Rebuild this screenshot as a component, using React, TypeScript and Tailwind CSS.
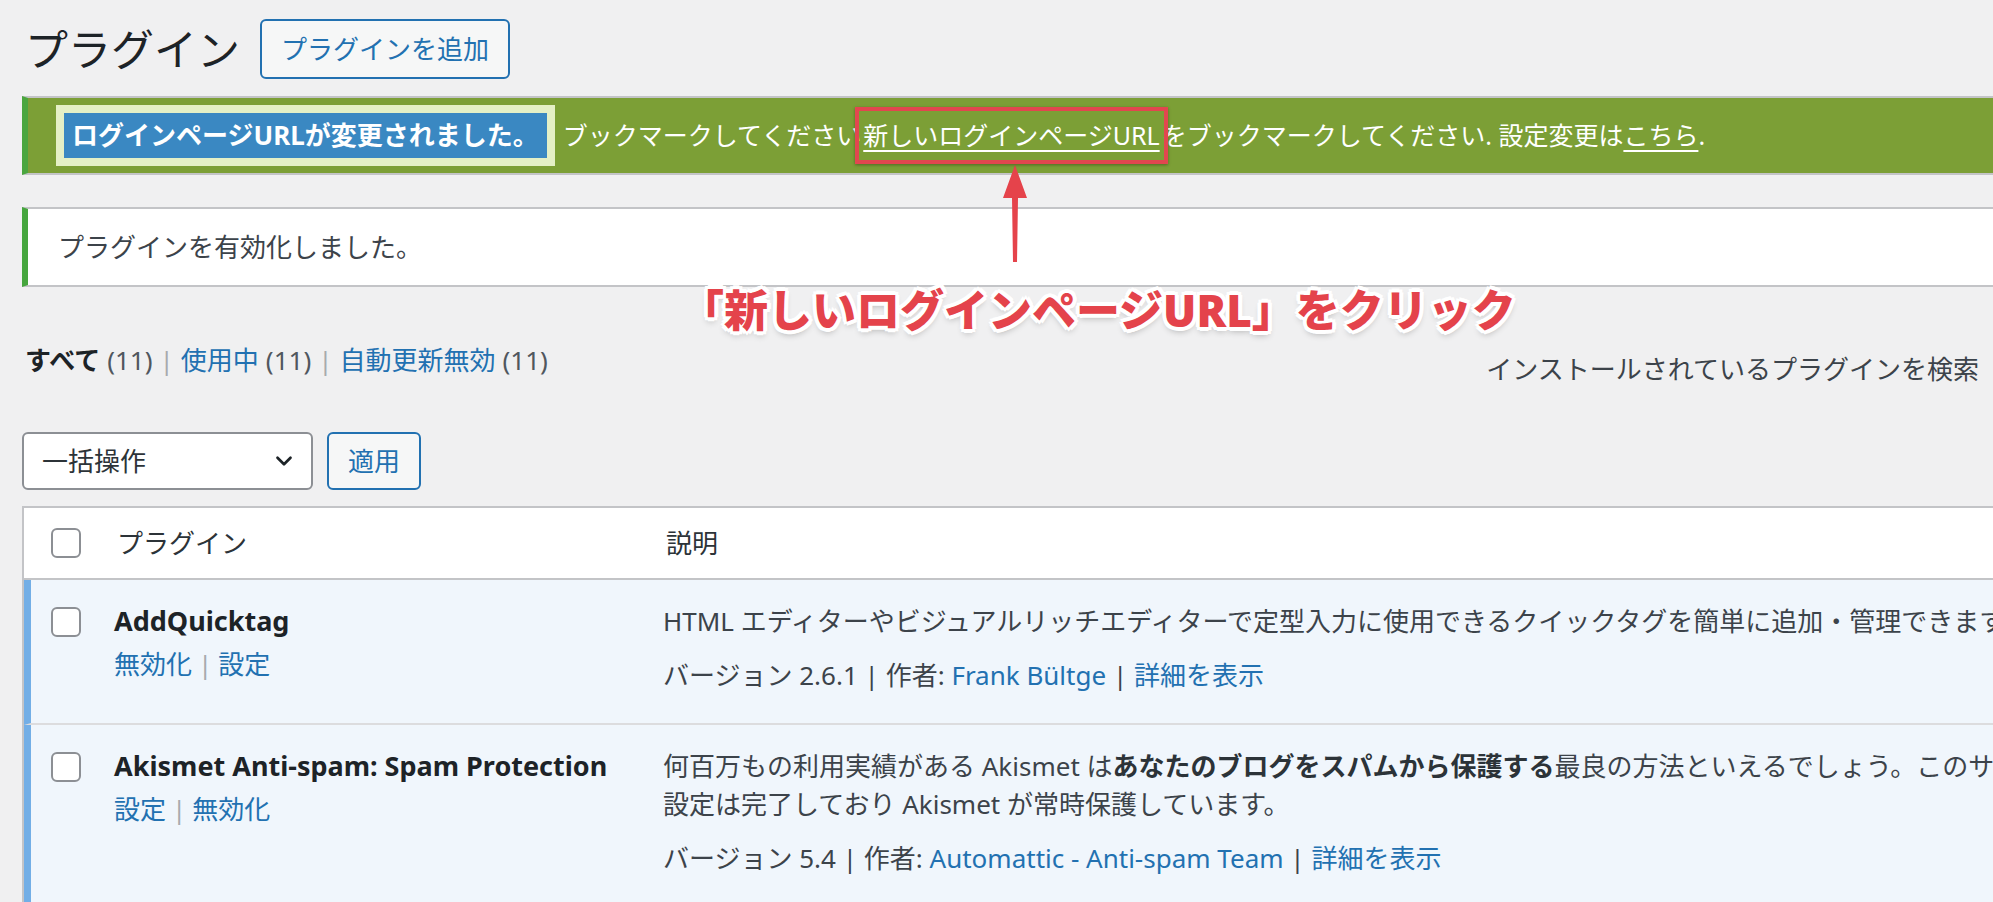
import { ChevronDown } from 'lucide-react';

const font = 'font-["Noto_Sans","Noto_Sans_CJK_JP",sans-serif]';

function Checkbox() {
  return <span className="block w-[30px] h-[30px] rounded-[6px] border-2 border-[#8c8f94] bg-white" />;
}

function Sep() {
  return <span className="text-[#a7aaad] mx-[7px]">|</span>;
}

type Row = {
  name: string;
  actions: string[];
  desc: React.ReactNode[];
  version: string;
  author: string;
};

const rows: Row[] = [
  {
    name: 'AddQuicktag',
    actions: ['無効化', '設定'],
    desc: ['HTML エディターやビジュアルリッチエディターで定型入力に使用できるクイックタグを簡単に追加・管理できます。'],
    version: '2.6.1',
    author: 'Frank Bültge',
  },
  {
    name: 'Akismet Anti-spam: Spam Protection',
    actions: ['設定', '無効化'],
    desc: [
      <>
        何百万もの利用実績がある Akismet は<strong className="font-bold text-[#2c3338]">あなたのブログをスパムから保護する</strong>最良の方法といえるでしょう。このサイトではすでに
      </>,
      '設定は完了しており Akismet が常時保護しています。',
    ],
    version: '5.4',
    author: 'Automattic - Anti-spam Team',
  },
];

export default function App() {
  return (
    <div className={`relative w-[1993px] h-[902px] overflow-hidden bg-[#f0f0f1] text-[#3c434a] text-[26px] ${font}`}>
      <div className="pl-[22px]">
        {/* heading */}
        <div className="flex items-center pt-[19px] gap-[20px]">
          <h1 className="ml-[3px] text-[43px] leading-none text-[#1d2327] font-normal">プラグイン</h1>
          <button className="h-[60px] px-[19px] rounded-[6px] border-2 border-[#2271b1] bg-[#f6f7f7] text-[#2271b1] text-[26px]">
            プラグインを追加
          </button>
        </div>

        {/* login url banner */}
        <div className="mt-[17px] h-[79px] flex items-center bg-[#7c9f36] border-y-2 border-y-[#c3c4c7] border-l-[6px] border-l-[#4aa63f] pl-[28px] whitespace-nowrap text-white text-[25px]">
          <span className="border-[8px] border-[#e4f0c6] bg-[#3a88c2] px-[8px] py-[3px] font-bold text-[26px]">
            ログインページURLが変更されました。
          </span>
          <span className="ml-[8px]">ブックマークしてください</span>
          <span className="mx-[-6px] border-[4px] border-[#e2474f] px-[4px] py-[6px] shadow-[0_1px_3px_rgba(0,0,0,0.35)] relative z-10">
            <span className="underline underline-offset-[5px]">新しいログインページURL</span>
          </span>
          <span>をブックマークしてください. 設定変更は</span>
          <span className="underline underline-offset-[5px]">こちら</span>
          <span>.</span>
        </div>

        {/* activated notice */}
        <div className="mt-[32px] h-[80px] flex items-center bg-white border-y-2 border-y-[#c3c4c7] border-l-[6px] border-l-[#46a63e] pl-[30px]">
          プラグインを有効化しました。
        </div>

        {/* filters + search */}
        <div className="mt-[56px] flex items-start justify-between">
          <div className="ml-[3px] leading-[35px] flex items-center">
            <span className="font-bold text-[#1d2327]">すべて</span>
            <span className="ml-[7px] text-[#50575e]">(11)</span>
            <Sep />
            <span className="text-[#2271b1]">使用中</span>
            <span className="ml-[7px] text-[#50575e]">(11)</span>
            <Sep />
            <span className="text-[#2271b1]">自動更新無効</span>
            <span className="ml-[7px] text-[#50575e]">(11)</span>
          </div>
          <div className="mt-[9px] mr-[14px] leading-[35px] text-[#3c434a]">インストールされているプラグインを検索</div>
        </div>

        {/* bulk actions */}
        <div className="mt-[45px] flex items-center gap-[14px]">
          <div className="w-[291px] h-[58px] rounded-[6px] border-2 border-[#8c8f94] bg-white flex items-center justify-between pl-[18px] pr-[14px] text-[#2c3338]">
            <span>一括操作</span>
            <ChevronDown size={26} strokeWidth={2.5} className="text-[#1d2327]" />
          </div>
          <button className="w-[94px] h-[58px] rounded-[6px] border-2 border-[#2271b1] bg-[#f6f7f7] text-[#2271b1]">
            適用
          </button>
        </div>

        {/* table */}
        <div className="mt-[16px] border-l-2 border-t-2 border-[#c3c4c7] bg-white">
          <div className="h-[72px] flex items-center border-b-2 border-[#c3c4c7] text-[#2c3338]">
            <div className="w-[89px] shrink-0 pl-[27px]">
              <Checkbox />
            </div>
            <div className="w-[549px] shrink-0 pl-[4px]">プラグイン</div>
            <div className="pl-[4px]">説明</div>
          </div>
          {rows.map((r, i) => (
            <div key={r.name} className={`flex bg-[#f0f6fc] border-l-[7px] border-l-[#72aee6] ${i === 0 ? 'border-b-2 border-b-[#dcdcde]' : ''} pt-[22px] pb-[29px]`}>
              <div className="w-[82px] shrink-0 pl-[20px] pt-[5px]">
                <Checkbox />
              </div>
              <div className="w-[550px] shrink-0 pl-[1px]">
                <div className="text-[27px] leading-[38px] font-bold text-[#1d2327] whitespace-nowrap">{r.name}</div>
                <div className="mt-[5px] leading-[38px] text-[#2271b1]">
                  {r.actions[0]}
                  <span className="text-[#a7aaad] mx-[6px]">|</span>
                  {r.actions[1]}
                </div>
              </div>
              <div className="whitespace-nowrap">
                {r.desc.map((d, j) => (
                  <div key={j} className="leading-[38.5px]">{d}</div>
                ))}
                <div className="mt-[15px] leading-[38px]">
                  バージョン {r.version} | 作者: <span className="text-[#2271b1]">{r.author}</span> |{' '}
                  <span className="text-[#2271b1]">詳細を表示</span>
                </div>
              </div>
            </div>
          ))}
        </div>
      </div>

      {/* annotation arrow */}
      <svg className="absolute left-[1003px] top-[165px]" width="24" height="98" viewBox="0 0 24 98">
        <polygon points="12,0 24,33 15,33 14,97 10,97 9,33 0,33" fill="#e5434b" />
      </svg>

      {/* annotation caption */}
      <div className="absolute left-[680px] top-[280px] whitespace-nowrap text-[44px] leading-[60px] font-black text-[#e4434b] [text-shadow:4px_0_0_#fff,-4px_0_0_#fff,0_4px_0_#fff,0_-4px_0_#fff,3px_3px_0_#fff,-3px_-3px_0_#fff,3px_-3px_0_#fff,-3px_3px_0_#fff,0_4px_7px_rgba(0,0,0,0.3)]">
        「新しいログインページURL」をクリック
      </div>
    </div>
  );
}
